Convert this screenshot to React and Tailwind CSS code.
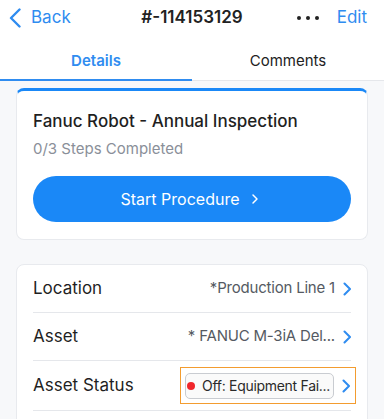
import { ChevronRight } from "lucide-react";

const rows = [
  { label: "Location", value: "*Production Line 1" },
  { label: "Asset", value: "* FANUC M-3iA Del..." },
];

function RowChevron() {
  return (
    <svg width="8" height="14" viewBox="0 0 8 14" className="shrink-0 ml-[8px]">
      <path d="M1.5 1.5 7 7l-5.5 5.5" fill="none" stroke="#2f8cf0" strokeWidth="2" strokeLinecap="round" strokeLinejoin="round" />
    </svg>
  );
}

export default function App() {
  return (
    <div
      className="w-[384px] h-[419px] overflow-hidden bg-[#f7f8fa]"
      style={{ fontFamily: "Inter, 'Liberation Sans', sans-serif" }}
    >
      {/* Nav bar */}
      <div className="bg-white">
        <div className="relative h-[36px] flex items-center justify-between pl-[9px] pr-[17px]">
          <button className="flex items-center text-[#2f8cf0] text-[17px]">
            <svg width="12" height="20" viewBox="0 0 12 20">
              <path d="M10.5 1.5 2 10l8.5 8.5" fill="none" stroke="#2f8cf0" strokeWidth="2.4" strokeLinecap="round" strokeLinejoin="round" />
            </svg>
            <span className="ml-[10px]">Back</span>
          </button>
          <div className="absolute left-1/2 -translate-x-1/2 text-[17px] font-semibold text-[#222]">
            #-114153129
          </div>
          <div className="flex items-center">
            <div className="flex gap-[5px] mr-[18px]">
              <span className="w-[4px] h-[4px] rounded-full bg-[#222]" />
              <span className="w-[4px] h-[4px] rounded-full bg-[#222]" />
              <span className="w-[4px] h-[4px] rounded-full bg-[#222]" />
            </div>
            <span className="text-[17px] text-[#2f8cf0]">Edit</span>
          </div>
        </div>

        {/* Tabs */}
        <div className="flex h-[45px]">
          <div className="flex-1 flex items-center justify-center pt-[8px] border-b-[2px] border-[#2f8cf0] text-[15px] font-semibold text-[#2f8cf0]">
            Details
          </div>
          <div className="flex-1 flex items-center justify-center pt-[7px] border-b border-[#e5e7eb] text-[15px] text-[#222]">
            Comments
          </div>
        </div>
      </div>

      <div className="px-[16px] pt-[7px]">
        {/* Procedure card */}
        <div className="bg-white rounded-[8px] border border-[#e8eaee] border-t-[3px] border-t-[#1a88f7] px-[16px] pt-[19px] pb-[17px]">
          <div className="text-[17px] font-medium text-[#1f1f1f] leading-[22px]">
            Fanuc Robot - Annual Inspection
          </div>
          <div className="mt-[7px] text-[15px] text-[#8a8f99] leading-[20px]">
            0/3 Steps Completed
          </div>
          <button className="mt-[17px] w-full h-[46px] rounded-full bg-[#1a88f7] text-white text-[16px] flex items-center justify-center">
            Start Procedure
            <ChevronRight size={16} strokeWidth={2.2} className="ml-[8px]" />
          </button>
        </div>

        {/* Details card */}
        <div className="mt-[24px] bg-white rounded-[8px] border border-[#e8eaee] px-[16px]">
          {rows.map((r) => (
            <div
              key={r.label}
              className="h-[48px] flex items-center justify-between border-b border-[#e5e7eb]"
            >
              <span className="text-[17px] text-[#1f1f1f]">{r.label}</span>
              <div className="flex items-center">
                <span className="text-[15px] text-[#555a62] whitespace-nowrap tracking-[-0.2px]">{r.value}</span>
                <RowChevron />
              </div>
            </div>
          ))}
          <div className="h-[50px] flex items-center justify-between border-b border-[#e5e7eb]">
            <span className="text-[17px] text-[#1f1f1f]">Asset Status</span>
            <div className="flex items-center border border-solid border-[#f39c2f] h-[37px] pl-[4px] pr-[5px] -mr-[5px]">
              <div className="flex items-center h-[26px] border border-[#c9ccd1] rounded-[5px] bg-[#fafafa] pl-[1px] pr-[3px]">
                <span className="w-[8px] h-[8px] rounded-full bg-[#f0262b] shrink-0" />
                <span className="ml-[7px] text-[14px] text-[#2a2a2a] whitespace-nowrap tracking-[-0.3px]">
                  Off: Equipment Fai...
                </span>
              </div>
              <RowChevron />
            </div>
          </div>
          <div className="h-[20px]" />
        </div>
      </div>
    </div>
  );
}
